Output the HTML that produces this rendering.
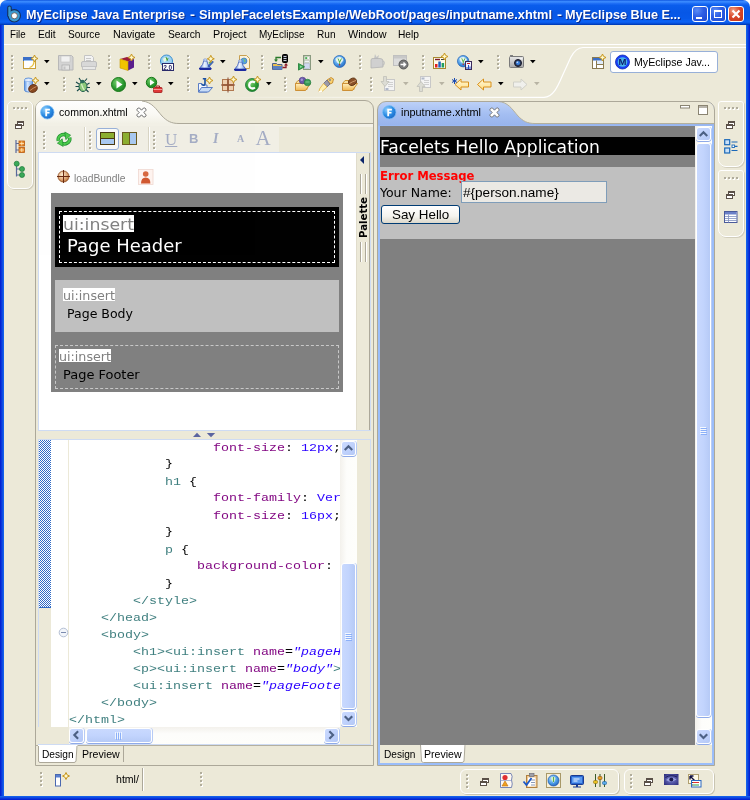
<!DOCTYPE html>
<html>
<head>
<meta charset="utf-8">
<title>MyEclipse</title>
<style>
html,body{margin:0;padding:0;}
body{width:750px;height:800px;overflow:hidden;background:#ECE9D8;position:relative;font-family:"Liberation Sans","DejaVu Sans",sans-serif;font-size:11px;color:#000;}
.abs,#win div,#win span,#win svg{position:absolute;}
#win{will-change:transform;opacity:0.999;position:absolute;left:0;top:0;width:750px;height:800px;overflow:hidden;background:linear-gradient(to bottom,#fff 0,#fff 12px,#ECE9D8 12px);}
.t{white-space:nowrap;line-height:1;transform-origin:0 0;}
/* title */
#title{left:0;top:0;width:750px;height:25px;background:linear-gradient(to bottom,#0A50DC 0,#3A8AFF 5%,#3484FC 9%,#1A6AF4 15%,#0A5DEC 22%,#0757E6 50%,#0759EA 74%,#0C62F4 86%,#0A58E8 92%,#0040C0 97%,#0038B0 100%);border-radius:7px 7px 0 0;}
#title .txt{top:7.5px;color:#fff;font-family:"Liberation Sans","DejaVu Sans",sans-serif;font-weight:bold;font-size:13px;text-shadow:1px 1px 0 #0a2a8a;}
.bl{left:0;top:25px;width:4px;height:775px;background:linear-gradient(to right,#0019CF 0,#0831D9 30%,#166AEE 100%);}
.br{left:746px;top:25px;width:4px;height:775px;background:linear-gradient(to left,#0019CF 0,#0831D9 30%,#166AEE 100%);}
.bb{left:0;top:796px;width:750px;height:4px;background:linear-gradient(to top,#0019CF 0,#0831D9 30%,#166AEE 100%);}
.menu{top:29px;font-size:11px;}
.pane{background:#ECE9D8;}
.mono{font-family:"Liberation Mono","DejaVu Sans Mono",monospace;font-size:13.33px;white-space:pre;line-height:17px;}
.tg{color:#3F7F7F}.at{color:#7F007F}.vl{color:#2A00FF}
.web{font-family:"DejaVu Sans","Liberation Sans",sans-serif;}
.vtrack{background:linear-gradient(to right,#F3F1EC 0,#FDFDFB 40%,#FEFEFB 100%);}
.htrack{background:linear-gradient(to bottom,#F3F1EC 0,#FDFDFB 40%,#FEFEFB 100%);}
.sbb{width:15px;height:15px;box-sizing:border-box;border:1px solid #fff;border-radius:3px;background:linear-gradient(135deg,#CBDAFE 0,#C0D2FC 50%,#B4C8F6 100%);box-shadow:0 1px 0 #8FAAE8, 1px 0 0 #B7CBF5;}
.sbt{box-sizing:border-box;border:1px solid #fff;border-radius:3px;box-shadow:0 1px 0 #8FAAE8, 1px 0 0 #B7CBF5;}
.sbtv{background:linear-gradient(to right,#C9D9FE 0,#C2D4FD 50%,#B6CAF6 100%);}
.sbth{background:linear-gradient(to bottom,#C9D9FE 0,#C2D4FD 50%,#B6CAF6 100%);}
.wb{top:6px;width:16px;height:16px;box-sizing:border-box;border:1px solid #fff;border-radius:3px;background:radial-gradient(circle at 30% 25%,#5B8DF6 0,#2C5DE4 45%,#1F49D0 100%);}
.wc{background:radial-gradient(circle at 30% 25%,#F0A083 0,#D9482A 45%,#C23418 100%);}
</style>
</head>
<body>
<div id="win">
<!-- TITLE BAR -->
<div id="title">
  <svg style="left:6px;top:4px" width="18" height="20" viewBox="0 0 18 20">
    <g stroke="#15305C" stroke-width="2.2" fill="#15305C"><rect x="2.3" y="2.5" width="2.4" height="10" rx="1.2"/><circle cx="8.3" cy="11.8" r="5.6"/></g>
    <g fill="#3C9AD0"><rect x="2.3" y="2.5" width="2.4" height="10" rx="1.2"/><circle cx="8.3" cy="11.8" r="5.6"/></g>
    <circle cx="8.4" cy="11.8" r="3" fill="#fff" stroke="#5A4038" stroke-width="0.7"/>
  </svg>
  <div class="wb" style="left:692px;"><div style="left:3px;top:9.5px;width:6px;height:2.5px;background:#fff"></div></div>
  <div class="wb" style="left:710px;"><div style="left:3px;top:3px;width:8px;height:8px;border:1px solid #fff;border-top-width:2px;box-sizing:border-box;"></div></div>
  <div class="wb wc" style="left:728px;"><svg style="left:0;top:0" width="14" height="14" viewBox="0 0 14 14"><path d="M3.5 3.5l7 7M10.5 3.5l-7 7" stroke="#fff" stroke-width="2.2"/></svg></div>
  <span class="t txt" style="left:26px;--w:159;transform:scaleX(0.9693)">MyEclipse Java Enterprise</span>
  <span class="t txt" style="left:190px;--w:5;transform:scaleX(1.1511)">-</span>
  <span class="t txt" style="left:199px;--w:353;transform:scaleX(0.9878)">SimpleFaceletsExample/WebRoot/pages/inputname.xhtml</span>
  <span class="t txt" style="left:557px;--w:5;transform:scaleX(1.1511)">-</span>
  <span class="t txt" style="left:565px;--w:115.5;transform:scaleX(0.9747)">MyEclipse Blue E...</span>
</div>
<div class="bl"></div><div class="br"></div><div class="bb"></div>

<!-- MENU -->
<span class="t menu" style="left:9.6px;--w:15.7;transform:scaleX(0.8853)">File</span>
<span class="t menu" style="left:37.5px;--w:17.7;transform:scaleX(0.9331)">Edit</span>
<span class="t menu" style="left:67.9px;--w:32;transform:scaleX(0.9180)">Source</span>
<span class="t menu" style="left:112.7px;--w:42.3;transform:scaleX(0.9742)">Navigate</span>
<span class="t menu" style="left:167.5px;--w:32.5;transform:scaleX(0.9323)">Search</span>
<span class="t menu" style="left:212.5px;--w:33.5;transform:scaleX(0.9781)">Project</span>
<span class="t menu" style="left:258.5px;--w:45.5;transform:scaleX(0.9077)">MyEclipse</span>
<span class="t menu" style="left:316.5px;--w:18.5;transform:scaleX(0.9164)">Run</span>
<span class="t menu" style="left:347.5px;--w:38.5;transform:scaleX(0.9840)">Window</span>
<span class="t menu" style="left:397.5px;--w:21;transform:scaleX(0.9282)">Help</span>
<div style="left:4px;top:44px;width:742px;height:1px;background:#fff"></div>

<!-- TB START -->
<svg width="0" height="0" style="left:0;top:0"><defs>
<linearGradient id="gbell" x1="0" y1="0" x2="1" y2="0"><stop offset="0" stop-color="#5A80D8"/><stop offset="0.4" stop-color="#F0F6FF"/><stop offset="0.650" stop-color="#C0D8F8"/><stop offset="1" stop-color="#4A70D0"/></linearGradient>
<radialGradient id="gglobe" cx="0.4" cy="0.350" r="0.750"><stop offset="0" stop-color="#C8E8FF"/><stop offset="0.550" stop-color="#4A9CE8"/><stop offset="1" stop-color="#2058B0"/></radialGradient>
<linearGradient id="gcam" x1="0" y1="0" x2="0" y2="1"><stop offset="0" stop-color="#E8E8E8"/><stop offset="1" stop-color="#A8A8A8"/></linearGradient>
<linearGradient id="gjar" x1="0" y1="0" x2="1" y2="0"><stop offset="0" stop-color="#5A98E8"/><stop offset="0.4" stop-color="#D8E8FF"/><stop offset="1" stop-color="#6AA0E8"/></linearGradient>
<radialGradient id="grun" cx="0.4" cy="0.350" r="0.750"><stop offset="0" stop-color="#7AD070"/><stop offset="0.6" stop-color="#2A9A30"/><stop offset="1" stop-color="#1A7A20"/></radialGradient>
<linearGradient id="gfold" x1="0" y1="0" x2="0" y2="1"><stop offset="0" stop-color="#FFF0C0"/><stop offset="1" stop-color="#F0B850"/></linearGradient>
<linearGradient id="garr" x1="0" y1="0" x2="0" y2="1"><stop offset="0" stop-color="#FFFBE0"/><stop offset="1" stop-color="#FFDC80"/></linearGradient>
</defs></svg>

<svg style="left:10.5px;top:55px" width="3" height="16" viewBox="0 0 3 16"><path d="M1 1h2v2h-2zM1 5h2v2h-2zM1 9h2v2h-2zM1 13h2v2h-2z" fill="#fff"/><path d="M0 0h2v2h-2zM0 4h2v2h-2zM0 8h2v2h-2zM0 12h2v2h-2z" fill="#B2AE9C"/></svg>
<svg style="left:108.3px;top:55px" width="3" height="16" viewBox="0 0 3 16"><path d="M1 1h2v2h-2zM1 5h2v2h-2zM1 9h2v2h-2zM1 13h2v2h-2z" fill="#fff"/><path d="M0 0h2v2h-2zM0 4h2v2h-2zM0 8h2v2h-2zM0 12h2v2h-2z" fill="#B2AE9C"/></svg>
<svg style="left:147.5px;top:55px" width="3" height="16" viewBox="0 0 3 16"><path d="M1 1h2v2h-2zM1 5h2v2h-2zM1 9h2v2h-2zM1 13h2v2h-2z" fill="#fff"/><path d="M0 0h2v2h-2zM0 4h2v2h-2zM0 8h2v2h-2zM0 12h2v2h-2z" fill="#B2AE9C"/></svg>
<svg style="left:186.5px;top:55px" width="3" height="16" viewBox="0 0 3 16"><path d="M1 1h2v2h-2zM1 5h2v2h-2zM1 9h2v2h-2zM1 13h2v2h-2z" fill="#fff"/><path d="M0 0h2v2h-2zM0 4h2v2h-2zM0 8h2v2h-2zM0 12h2v2h-2z" fill="#B2AE9C"/></svg>
<svg style="left:261.3px;top:55px" width="3" height="16" viewBox="0 0 3 16"><path d="M1 1h2v2h-2zM1 5h2v2h-2zM1 9h2v2h-2zM1 13h2v2h-2z" fill="#fff"/><path d="M0 0h2v2h-2zM0 4h2v2h-2zM0 8h2v2h-2zM0 12h2v2h-2z" fill="#B2AE9C"/></svg>
<svg style="left:359.3px;top:55px" width="3" height="16" viewBox="0 0 3 16"><path d="M1 1h2v2h-2zM1 5h2v2h-2zM1 9h2v2h-2zM1 13h2v2h-2z" fill="#fff"/><path d="M0 0h2v2h-2zM0 4h2v2h-2zM0 8h2v2h-2zM0 12h2v2h-2z" fill="#B2AE9C"/></svg>
<svg style="left:421.5px;top:55px" width="3" height="16" viewBox="0 0 3 16"><path d="M1 1h2v2h-2zM1 5h2v2h-2zM1 9h2v2h-2zM1 13h2v2h-2z" fill="#fff"/><path d="M0 0h2v2h-2zM0 4h2v2h-2zM0 8h2v2h-2zM0 12h2v2h-2z" fill="#B2AE9C"/></svg>
<svg style="left:496.5px;top:55px" width="3" height="16" viewBox="0 0 3 16"><path d="M1 1h2v2h-2zM1 5h2v2h-2zM1 9h2v2h-2zM1 13h2v2h-2z" fill="#fff"/><path d="M0 0h2v2h-2zM0 4h2v2h-2zM0 8h2v2h-2zM0 12h2v2h-2z" fill="#B2AE9C"/></svg>
<svg style="left:10.5px;top:77px" width="3" height="16" viewBox="0 0 3 16"><path d="M1 1h2v2h-2zM1 5h2v2h-2zM1 9h2v2h-2zM1 13h2v2h-2z" fill="#fff"/><path d="M0 0h2v2h-2zM0 4h2v2h-2zM0 8h2v2h-2zM0 12h2v2h-2z" fill="#B2AE9C"/></svg>
<svg style="left:62.5px;top:77px" width="3" height="16" viewBox="0 0 3 16"><path d="M1 1h2v2h-2zM1 5h2v2h-2zM1 9h2v2h-2zM1 13h2v2h-2z" fill="#fff"/><path d="M0 0h2v2h-2zM0 4h2v2h-2zM0 8h2v2h-2zM0 12h2v2h-2z" fill="#B2AE9C"/></svg>
<svg style="left:186.5px;top:77px" width="3" height="16" viewBox="0 0 3 16"><path d="M1 1h2v2h-2zM1 5h2v2h-2zM1 9h2v2h-2zM1 13h2v2h-2z" fill="#fff"/><path d="M0 0h2v2h-2zM0 4h2v2h-2zM0 8h2v2h-2zM0 12h2v2h-2z" fill="#B2AE9C"/></svg>
<svg style="left:284.3px;top:77px" width="3" height="16" viewBox="0 0 3 16"><path d="M1 1h2v2h-2zM1 5h2v2h-2zM1 9h2v2h-2zM1 13h2v2h-2z" fill="#fff"/><path d="M0 0h2v2h-2zM0 4h2v2h-2zM0 8h2v2h-2zM0 12h2v2h-2z" fill="#B2AE9C"/></svg>
<svg style="left:369.6px;top:77px" width="3" height="16" viewBox="0 0 3 16"><path d="M1 1h2v2h-2zM1 5h2v2h-2zM1 9h2v2h-2zM1 13h2v2h-2z" fill="#fff"/><path d="M0 0h2v2h-2zM0 4h2v2h-2zM0 8h2v2h-2zM0 12h2v2h-2z" fill="#B2AE9C"/></svg>
<svg style="left:22.7px;top:55px;overflow:visible" width="16" height="16" viewBox="0 0 16 16"><rect x="0.5" y="2.5" width="12" height="11" fill="#fff" stroke="#C9A03A"/><rect x="0.5" y="2.5" width="12" height="3" fill="#3A6FC8" stroke="#3A6FC8"/><path d="M1 5.5h11" stroke="#9CC0F0"/><path d="M11 5 Q11.5 11 6.5 12.5" fill="none" stroke="#E8C040" stroke-width="1.2"/><g transform="translate(8,0)"><path d="M3.5 0 L4.6 2.4 L7 3.5 L4.6 4.6 L3.5 7 L2.4 4.6 L0 3.5 L2.4 2.4 Z" fill="#FFF8C8" stroke="#C8961E" stroke-width="1"/></g></svg>
<svg style="left:58px;top:55px;overflow:visible" width="16" height="16" viewBox="0 0 16 16"><path d="M0.5 0.5h13l1.5 1.5v13h-14.5z" fill="#D4D4D4" stroke="#B8B8B8"/><rect x="3" y="1" width="9" height="6" fill="#F2F2F2" stroke="#C0C0C0" stroke-width="0.6"/><rect x="4" y="10" width="7.5" height="5" fill="#E4E4E4" stroke="#B0B0B0" stroke-width="0.8"/><rect x="5.5" y="11.5" width="2" height="3" fill="#C4C4C4"/></svg>
<svg style="left:81px;top:55px;overflow:visible" width="16" height="16" viewBox="0 0 16 16"><path d="M3.5 0.5h7l2 2v5h-9z" fill="#F4F4F4" stroke="#C4C4C4"/><path d="M5 3.5h5M5 5.5h5" stroke="#C8C8C8"/><rect x="0.5" y="6.5" width="15" height="6" rx="1.5" fill="#D8D8D8" stroke="#BEBEBE"/><rect x="1.5" y="11.5" width="13" height="3" fill="#E8E8E8" stroke="#C4C4C4"/></svg>
<svg style="left:118.7px;top:54.5px;overflow:visible" width="16" height="16" viewBox="0 0 16 16"><path d="M1 4 L8 2 L15 4 L9 6.5 Z" fill="#9B1C3A"/><path d="M1 4 L9 6.5 L9 15.5 L1 13 Z" fill="#F2C400"/><path d="M9 6.5 L15 4 L15 12.5 L9 15.5 Z" fill="#5A1E8C"/><path d="M1 4 L9 6.5 L9 15.5 L1 13 Z" fill="none" stroke="#C89A00" stroke-width="0.6"/><g transform="translate(9,-1)"><path d="M3.5 0 L4.6 2.4 L7 3.5 L4.6 4.6 L3.5 7 L2.4 4.6 L0 3.5 L2.4 2.4 Z" fill="#FFF8C8" stroke="#C8961E" stroke-width="1"/></g></svg>
<svg style="left:160.3px;top:54.5px;overflow:visible" width="16" height="16" viewBox="0 0 16 16"><circle cx="6.5" cy="6" r="6" fill="#9DD2F4" stroke="#3A8FD0"/><path d="M3 4 Q5 1 8 3 Q7 6 4 7Z" fill="#E8F8E0"/><path d="M6 2l1 3M8 3l-1 3" stroke="#4AA040"/><rect x="2.5" y="8.5" width="11" height="7" fill="#fff" stroke="#2A2A6A"/><text x="3.2" y="14.6" font-family="Liberation Sans, sans-serif" font-weight="bold" font-size="6.5" fill="#2A2A6A">2.0</text></svg>
<svg style="left:198.7px;top:55px;overflow:visible" width="16" height="16" viewBox="0 0 16 16"><path d="M4.8 5.8 L7.8 5.8 Q8.2 9.5 11.8 13 L0.8 13 Q4.4 9.5 4.8 5.8 Z" fill="url(#gbell)" stroke="#3A58B8" stroke-width="0.8"/><ellipse cx="6.3" cy="5" rx="1.9" ry="1.1" fill="#D8E8FF" stroke="#5A78C8" stroke-width="0.6"/><path d="M0 13 L12.6 13 L12.6 14 L11.6 15 L1 15 L0 14 Z" fill="#1C2AA0"/><path d="M13.5 6 L14.5 7 L10.5 11.5 L9 11.8 L9.3 10.3 Z" fill="#3A68C8" stroke="#2A4890" stroke-width="0.5"/><path d="M9.5 7.5l2-1.5 1 1.5-2 1.5z" fill="#6AB060"/><g transform="translate(8.3,0.3)"><path d="M3.5 0 L4.6 2.4 L7 3.5 L4.6 4.6 L3.5 7 L2.4 4.6 L0 3.5 L2.4 2.4 Z" fill="#FFF8C8" stroke="#C8961E" stroke-width="1"/></g></svg>
<svg style="left:234px;top:54.5px;overflow:visible" width="16" height="16" viewBox="0 0 16 16"><path d="M5.5 0.5h7l3 3v10h-10z" fill="#FBF3DC" stroke="#C8A050"/><circle cx="10" cy="6" r="3" fill="#58A0E0" stroke="#3070B8" stroke-width="0.6"/><path d="M9 4 Q11 4 11 7" stroke="#80C860" fill="none"/><g transform="translate(0,1)"><path d="M4.8 5.8 L7.8 5.8 Q8.2 9.5 11.8 13 L0.8 13 Q4.4 9.5 4.8 5.8 Z" fill="url(#gbell)" stroke="#3A58B8" stroke-width="0.8"/><ellipse cx="6.3" cy="5" rx="1.9" ry="1.1" fill="#D8E8FF" stroke="#5A78C8" stroke-width="0.6"/><path d="M0 13 L12.6 13 L12.6 14 L11.6 15 L1 15 L0 14 Z" fill="#1C2AA0"/></g></svg>
<svg style="left:272px;top:54px;overflow:visible" width="16" height="16" viewBox="0 0 16 16"><rect x="10.5" y="0.5" width="5" height="8" rx="1" fill="#1A1A1A" stroke="#000"/><path d="M11.5 2.5h3M11.5 4.5h3M11.5 6.5h3" stroke="#C8D0E0"/><path d="M9 3.5h-5v3" fill="none" stroke="#2A7A2A" stroke-width="1.3"/><path d="M2 5.5l2 2.5 2-2.5z" fill="#2A7A2A"/><path d="M0.5 9.5h4l1 1h4.5v5h-9.5z" fill="#E8C050" stroke="#4A6090"/><path d="M1 12h9v3.5h-9z" fill="#5A80C0"/><path d="M10.5 13.5h3.5v-3" fill="none" stroke="#8A1A2A" stroke-width="1.3"/><path d="M12 11.5l2-2.5 2 2.5z" fill="#8A1A2A"/></svg>
<svg style="left:298px;top:55px;overflow:visible" width="16" height="16" viewBox="0 0 16 16"><rect x="5.5" y="0.5" width="7" height="14" fill="#E4E8E0" stroke="#8A9A80"/><rect x="6.5" y="1.5" width="5" height="3" fill="#F4F6F0" stroke="#A8B4A0" stroke-width="0.5"/><rect x="7.2" y="2.3" width="2" height="1.5" fill="#20A030"/><rect x="6.5" y="5.5" width="5" height="2" fill="#F0F2F8" stroke="#A8B4A0" stroke-width="0.5"/><rect x="6.5" y="8.5" width="5" height="5" fill="#D0D8F0" stroke="#A8B0C8" stroke-width="0.5"/><path d="M0.5 8.5l6 3.3-6 3.3z" fill="#38A858" stroke="#1A7A30" stroke-width="0.8"/><path d="M2 10.5l2.5 1.3-2.5 1.3z" fill="#90D8A0"/></svg>
<svg style="left:333px;top:54.5px;overflow:visible" width="16" height="16" viewBox="0 0 16 16"><circle cx="6.5" cy="6.5" r="6" fill="url(#gglobe)" stroke="#2A68B8" stroke-width="0.8"/><path d="M2.5 4 Q4 1.8 7 2 Q10 2.5 10.5 5 Q9 7.5 7 9.5 Q3.5 8 2.5 4Z" fill="#F4FAF0" opacity="0.850"/><path d="M5 3.5l1.5 3.5M8.5 3.5l-1.8 3.5M6.6 6v3" stroke="#58B048" stroke-width="1" fill="none"/><circle cx="6.6" cy="9.8" r="0.8" fill="#D02020"/></svg>
<svg style="left:370.3px;top:54px;overflow:visible" width="16" height="16" viewBox="0 0 16 16"><path d="M5 0l1.5 3 2.5-2-1 4h-4z" fill="#C4C4C4"/><path d="M1 6 Q1 4 4 4.5 L10 4.5 Q13 4.5 13 7 L13 13 L1 14Z" fill="#D0D0D0" stroke="#B4B4B4" stroke-width="0.8"/><path d="M12 7 Q15 7 14 10 Q13.5 11.5 12 11" fill="none" stroke="#C0C0C0" stroke-width="1.2"/></svg>
<svg style="left:393px;top:55px;overflow:visible" width="16" height="16" viewBox="0 0 16 16"><rect x="0.5" y="0.5" width="13" height="10" fill="#DCDCDC" stroke="#C0C0C0"/><rect x="1" y="1" width="12" height="2.5" fill="#C8C8C8"/><circle cx="10.5" cy="9.5" r="4.5" fill="#7A7A7A" stroke="#5A5A5A"/><path d="M7.5 9.5h5M10.5 7.5l2 2-2 2" fill="none" stroke="#fff" stroke-width="1.4"/></svg>
<svg style="left:433px;top:54.3px;overflow:visible" width="16" height="16" viewBox="0 0 16 16"><rect x="0.5" y="3.5" width="12" height="11" fill="#FFFBEA" stroke="#A88830"/><path d="M2 5.5h5" stroke="#7A1A2A" stroke-width="1.4"/><path d="M8 5.5h3" stroke="#404040" stroke-width="1"/><rect x="2" y="10" width="2.5" height="3.5" fill="#E02020"/><rect x="5.3" y="7.5" width="2.5" height="6" fill="#2060C0"/><rect x="8.6" y="9" width="2.5" height="4.5" fill="#20A060"/><g transform="translate(8,-1)"><path d="M3.5 0 L4.6 2.4 L7 3.5 L4.6 4.6 L3.5 7 L2.4 4.6 L0 3.5 L2.4 2.4 Z" fill="#FFF8C8" stroke="#C8961E" stroke-width="1"/></g></svg>
<svg style="left:456.7px;top:54.5px;overflow:visible" width="16" height="16" viewBox="0 0 16 16"><g transform="scale(0.95)"><circle cx="6.5" cy="6.5" r="6" fill="url(#gglobe)" stroke="#2A68B8" stroke-width="0.8"/><path d="M2.5 4 Q4 1.8 7 2 Q10 2.5 10.5 5 Q9 7.5 7 9.5 Q3.5 8 2.5 4Z" fill="#F4FAF0" opacity="0.850"/><path d="M5 3.5l1.5 3.5M8.5 3.5l-1.8 3.5M6.6 6v3" stroke="#58B048" stroke-width="1" fill="none"/><circle cx="6.6" cy="9.8" r="0.8" fill="#D02020"/></g><rect x="8.5" y="6.5" width="6" height="8" fill="#F0F0FF" stroke="#3A2A5A"/><path d="M10 12v2M11.5 10v4M13 11.5v2.5" stroke-width="1" stroke="#2050C0"/><path d="M10 8.5h3" stroke="#D02020"/></svg>
<svg style="left:509px;top:55.3px;overflow:visible" width="16" height="16" viewBox="0 0 16 16"><rect x="1" y="0" width="3" height="2" fill="#808080"/><rect x="0.5" y="1.5" width="14" height="11" rx="1" fill="url(#gcam)" stroke="#7A7A7A"/><rect x="10.5" y="3" width="3" height="1.5" fill="#F4F4F4"/><circle cx="9" cy="8" r="3.5" fill="#2A3A5A" stroke="#1A1A2A"/><circle cx="9" cy="8" r="2" fill="#3A80E0"/><circle cx="8.3" cy="7.3" r="0.8" fill="#C8E0FF"/></svg>
<svg style="left:43.7px;top:60px" width="6" height="4" viewBox="0 0 6 4"><path d="M0 0h5.6l-2.8 3.2z" fill="#000"/></svg>
<svg style="left:219.6px;top:60px" width="6" height="4" viewBox="0 0 6 4"><path d="M0 0h5.6l-2.8 3.2z" fill="#000"/></svg>
<svg style="left:317.7px;top:60px" width="6" height="4" viewBox="0 0 6 4"><path d="M0 0h5.6l-2.8 3.2z" fill="#000"/></svg>
<svg style="left:477.7px;top:60px" width="6" height="4" viewBox="0 0 6 4"><path d="M0 0h5.6l-2.8 3.2z" fill="#000"/></svg>
<svg style="left:529.7px;top:60px" width="6" height="4" viewBox="0 0 6 4"><path d="M0 0h5.6l-2.8 3.2z" fill="#000"/></svg>
<svg style="left:22.7px;top:77px;overflow:visible" width="16" height="16" viewBox="0 0 16 16"><path d="M1.5 3 Q1.5 1 5.5 1 Q9.5 1 9.5 3 L9.5 13 Q9.5 15 5.5 15 Q1.5 15 1.5 13Z" fill="url(#gjar)" stroke="#4A80D0" stroke-width="0.8"/><ellipse cx="5.5" cy="3" rx="4" ry="1.5" fill="#E4F0FF" stroke="#6A9AE0" stroke-width="0.5"/><ellipse cx="10" cy="11.5" rx="4.5" ry="3.8" transform="rotate(-30 10 11.5)" fill="#8A4A20" stroke="#5A2A10" stroke-width="0.8"/><path d="M7 13.5 Q10 11 13.5 9.5" stroke="#D8A070" fill="none" stroke-width="0.8"/><g transform="translate(9,0)"><path d="M3.5 0 L4.6 2.4 L7 3.5 L4.6 4.6 L3.5 7 L2.4 4.6 L0 3.5 L2.4 2.4 Z" fill="#FFF8C8" stroke="#C8961E" stroke-width="1"/></g></svg>
<svg style="left:75px;top:77px;overflow:visible" width="16" height="16" viewBox="0 0 16 16"><path d="M4 1l2 3M12 1.5l-2 2.5M1 5l3 2M0.5 9.5h3.5M2 14l3-2.5M14.5 6l-2.5 1.5M15 10.5h-3M13.5 15l-2.5-2.5" stroke="#1A4A4A" stroke-width="1.1" fill="none"/><ellipse cx="8" cy="9.5" rx="4" ry="5" fill="#8AC878" stroke="#1A5A4A" stroke-width="1"/><ellipse cx="7.5" cy="4.5" rx="2.3" ry="1.8" fill="#2A6A5A"/><path d="M6.5 7 Q8 12 9.5 13" stroke="#D8F0C8" stroke-width="1.2" fill="none"/></svg>
<svg style="left:111px;top:76.5px;overflow:visible" width="16" height="16" viewBox="0 0 16 16"><circle cx="7.5" cy="7.5" r="7" fill="url(#grun)" stroke="#1A7A1A" stroke-width="1"/><path d="M5.5 3.5l6 4-6 4z" fill="#fff"/></svg>
<svg style="left:145.7px;top:77px;overflow:visible" width="16" height="16" viewBox="0 0 16 16"><circle cx="5.5" cy="5.5" r="5.2" fill="url(#grun)" stroke="#1A7A1A" stroke-width="1"/><path d="M4 2.5l4.5 3-4.5 3z" fill="#fff"/><rect x="7.5" y="10.5" width="8.5" height="5" rx="0.8" fill="#E03838" stroke="#A01818" stroke-width="0.8"/><path d="M10 10.5v-1.5h3.5v1.5" fill="none" stroke="#A01818" stroke-width="1"/><path d="M7.5 12.5h8.5" stroke="#FFB0B0" stroke-width="0.8"/></svg>
<svg style="left:197.3px;top:76.7px;overflow:visible" width="16" height="16" viewBox="0 0 16 16"><path d="M1.5 6.5h3.5l1 1.5h4v7h-8.5z" fill="#F4F8FF" stroke="#4A70C0" stroke-width="0.9"/><path d="M1.5 15l3-4.5h11l-4 4.5z" fill="#C8DCF8" stroke="#4A70C0" stroke-width="0.9"/><path d="M5.8 1.8h3.4M8 1.8v4.5 Q8 8.3 6.3 8.3 Q5 8.3 4.8 7" fill="none" stroke="#1A50A0" stroke-width="1.6"/><g transform="translate(9,0)"><path d="M3.5 0 L4.6 2.4 L7 3.5 L4.6 4.6 L3.5 7 L2.4 4.6 L0 3.5 L2.4 2.4 Z" fill="#FFF8C8" stroke="#C8961E" stroke-width="1"/></g></svg>
<svg style="left:221px;top:77px;overflow:visible" width="16" height="16" viewBox="0 0 16 16"><rect x="1.5" y="2.5" width="5" height="5" fill="#F0D0B0" stroke="#B07850"/><rect x="7.5" y="2.5" width="5" height="5" fill="#F0D0B0" stroke="#B07850"/><rect x="1.5" y="8.5" width="5" height="5" fill="#F0D0B0" stroke="#B07850"/><rect x="7.5" y="8.5" width="5" height="5" fill="#F0D0B0" stroke="#B07850"/><path d="M7 0.5v15M0 8h14" stroke="#8A4A30" stroke-width="1"/><g transform="translate(9,-1)"><path d="M3.5 0 L4.6 2.4 L7 3.5 L4.6 4.6 L3.5 7 L2.4 4.6 L0 3.5 L2.4 2.4 Z" fill="#FFF8C8" stroke="#C8961E" stroke-width="1"/></g></svg>
<svg style="left:244.7px;top:77px;overflow:visible" width="16" height="16" viewBox="0 0 16 16"><circle cx="7" cy="8" r="6.5" fill="url(#grun)" stroke="#1A7A3A" stroke-width="0.8"/><path d="M10 5.5 Q7 3.5 4.8 6 Q3.5 8.5 5 10.5 Q7.5 12.5 10 10.5" fill="none" stroke="#fff" stroke-width="2.2"/><g transform="translate(9,-1)"><path d="M3.5 0 L4.6 2.4 L7 3.5 L4.6 4.6 L3.5 7 L2.4 4.6 L0 3.5 L2.4 2.4 Z" fill="#FFF8C8" stroke="#C8961E" stroke-width="1"/></g></svg>
<svg style="left:294.7px;top:77px;overflow:visible" width="16" height="16" viewBox="0 0 16 16"><path d="M0.5 6.5l2.5-3h9v9z" fill="#F8E0A0" stroke="#C8902A" stroke-width="0.9"/><path d="M0.5 6.5h11l4 0 -5 7h-10z" fill="url(#gfold)" stroke="#C8882A" stroke-width="0.9"/><circle cx="7.5" cy="3.5" r="3.3" fill="#6A58A8" stroke="#4A3888" stroke-width="0.6"/><circle cx="6.8" cy="2.8" r="1.2" fill="#A898D8"/><circle cx="12.5" cy="5.5" r="3.3" fill="#3A9A58" stroke="#1A7A38" stroke-width="0.6"/><path d="M10.5 5h4" stroke="#90D8A0" stroke-width="0.8"/></svg>
<svg style="left:318px;top:76.5px;overflow:visible" width="16" height="16" viewBox="0 0 16 16"><path d="M9 3l4-2.5 2.5 1.5-1 4-2.5 1z" fill="#F8D070" stroke="#C08020" stroke-width="0.8"/><circle cx="12" cy="3" r="0.8" fill="#3050A0"/><path d="M9 3l3 4-3 3-3.5-3.5z" fill="#9A9AA8" stroke="#6A6A78" stroke-width="0.8"/><path d="M5.5 6.5l3.5 3.5-5 4.5-3 0.5 0.5-3z" fill="#FFF0B0" stroke="#E0B040" stroke-width="0.8"/><path d="M1 15l3-1" stroke="#fff" stroke-width="1.5"/></svg>
<svg style="left:342px;top:77px;overflow:visible" width="16" height="16" viewBox="0 0 16 16"><path d="M0.5 6.5l2.5-3h9v9z" fill="#F8E0A0" stroke="#C8902A" stroke-width="0.9"/><path d="M0.5 6.5h11l4 0 -5 7h-10z" fill="url(#gfold)" stroke="#C8882A" stroke-width="0.9"/><ellipse cx="10.5" cy="4.8" rx="4.2" ry="3.5" transform="rotate(-25 10.5 4.8)" fill="#8A5028" stroke="#5A3010" stroke-width="0.8"/><path d="M7.5 6.5 Q10.5 4.5 14 3.5" stroke="#D8A878" fill="none" stroke-width="0.9"/></svg>
<svg style="left:381px;top:76.4px;overflow:visible" width="16" height="16" viewBox="0 0 16 16"><rect x="3.5" y="3.5" width="10" height="11" fill="#F4F4F4" stroke="#C8C8C8"/><path d="M7 6.5h5M7 8.5h5M7 10.5h5" stroke="#D0D0D0"/><rect x="4.5" y="12" width="3" height="2" fill="#B0B8C8"/><path d="M2.5 0.5h3v5h2.5l-4 5-4-5h2.5z" fill="#DCDCD4" stroke="#C0C0B8" stroke-width="0.8"/></svg>
<svg style="left:416.7px;top:76px;overflow:visible" width="16" height="16" viewBox="0 0 16 16"><rect x="3.5" y="0.5" width="10" height="11" fill="#F4F4F4" stroke="#C8C8C8"/><path d="M7 4.5h5M7 6.5h5M7 8.5h5" stroke="#D0D0D0"/><rect x="4.5" y="1.5" width="3" height="2" fill="#B0B8C8"/><path d="M2.5 15.5h3v-5h2.5l-4-5-4 5h2.5z" fill="#DCDCD4" stroke="#C0C0B8" stroke-width="0.8"/></svg>
<svg style="left:451.7px;top:77.5px;overflow:visible" width="16" height="16" viewBox="0 0 16 16"><g transform="translate(2.5,0.5)"><path d="M0.5 6l6-5.5v3h7.5v5h-7.5v3z" fill="url(#garr)" stroke="#D8901A" stroke-width="1" stroke-linejoin="round"/></g><path d="M2.5 0v6M0 1.5l5 3M5 1.5l-5 3" stroke="#1A4AB0" stroke-width="1"/></svg>
<svg style="left:477px;top:77.5px;overflow:visible" width="16" height="16" viewBox="0 0 16 16"><g transform="translate(0,0.5)"><path d="M0.5 6l6-5.5v3h7.5v5h-7.5v3z" fill="url(#garr)" stroke="#D8901A" stroke-width="1" stroke-linejoin="round"/></g></svg>
<svg style="left:513px;top:77.5px;overflow:visible" width="16" height="16" viewBox="0 0 16 16"><g transform="translate(14.5,0.5) scale(-1,1)"><path d="M0.5 6l6-5.5v3h7.5v5h-7.5v3z" fill="#F0F0EC" stroke="#D0D0C8" stroke-width="1" stroke-linejoin="round"/></g></svg>
<svg style="left:43.7px;top:82px" width="6" height="4" viewBox="0 0 6 4"><path d="M0 0h5.6l-2.8 3.2z" fill="#000"/></svg>
<svg style="left:96px;top:82px" width="6" height="4" viewBox="0 0 6 4"><path d="M0 0h5.6l-2.8 3.2z" fill="#000"/></svg>
<svg style="left:132px;top:82px" width="6" height="4" viewBox="0 0 6 4"><path d="M0 0h5.6l-2.8 3.2z" fill="#000"/></svg>
<svg style="left:167.7px;top:82px" width="6" height="4" viewBox="0 0 6 4"><path d="M0 0h5.6l-2.8 3.2z" fill="#000"/></svg>
<svg style="left:265.7px;top:82px" width="6" height="4" viewBox="0 0 6 4"><path d="M0 0h5.6l-2.8 3.2z" fill="#000"/></svg>
<svg style="left:497.7px;top:82px" width="6" height="4" viewBox="0 0 6 4"><path d="M0 0h5.6l-2.8 3.2z" fill="#000"/></svg>
<svg style="left:403px;top:82px" width="6" height="4" viewBox="0 0 6 4"><path d="M0 0h5.6l-2.8 3.2z" fill="#B8B4A4"/></svg>
<svg style="left:438.7px;top:82px" width="6" height="4" viewBox="0 0 6 4"><path d="M0 0h5.6l-2.8 3.2z" fill="#B8B4A4"/></svg>
<svg style="left:534px;top:82px" width="6" height="4" viewBox="0 0 6 4"><path d="M0 0h5.6l-2.8 3.2z" fill="#B8B4A4"/></svg>
<svg style="left:4px;top:44px" width="742" height="56" viewBox="0 0 742 56"><defs><linearGradient id="gtail" x1="0" y1="0" x2="1" y2="0"><stop offset="0.350" stop-color="#fff" stop-opacity="0"/><stop offset="1" stop-color="#fff" stop-opacity="1"/></linearGradient></defs><rect x="0" y="52.8" width="540" height="1.2" fill="url(#gtail)"/><path d="M742 3.5 L579 3.5 C572 4 569 9 566.8 13.2 L557.6 33.6 C554 42 549 53.4 540 53.4" fill="none" stroke="#fff" stroke-width="1.2"/></svg>
<svg style="left:592px;top:55.3px;overflow:visible" width="16" height="16" viewBox="0 0 16 16"><rect x="0.5" y="2.5" width="11" height="11" fill="#fff" stroke="#8A7A50"/><rect x="1" y="3" width="10" height="2.5" fill="#3A6FC8"/><path d="M4.5 5.5v8M4.5 9.5h7" stroke="#8A7A50"/><rect x="5" y="6" width="6" height="3" fill="#E0ECFA"/><g transform="translate(7,-1)"><path d="M3.5 0 L4.6 2.4 L7 3.5 L4.6 4.6 L3.5 7 L2.4 4.6 L0 3.5 L2.4 2.4 Z" fill="#FFF8C8" stroke="#C8961E" stroke-width="1"/></g></svg>
<div style="left:610px;top:51px;width:108px;height:22px;box-sizing:border-box;background:#fff;border:1px solid #98B0D8;border-radius:3px;"></div>
<svg style="left:615px;top:54px" width="16" height="16" viewBox="0 0 16 16"><circle cx="7.5" cy="8" r="7" fill="#1A40F8" stroke="#1028B0" stroke-width="0.8"/><circle cx="7.5" cy="8" r="4.8" fill="#48B4EA"/><text x="7.5" y="11.3" text-anchor="middle" font-family="Liberation Sans, sans-serif" font-weight="bold" font-size="9.5" fill="#102070">M</text></svg>
<span class="t" style="left:634px;top:57px;font-size:11px;--w:76;transform:scaleX(0.9662)">MyEclipse Jav...</span>
<!-- TB END -->
<!-- LEFT TRIM -->
<div style="left:6.5px;top:100.5px;width:26.5px;height:88px;border:1.5px solid #fff;border-radius:5px 5px 7px 7px;box-sizing:border-box;box-shadow:1px 1px 0 #D2CEBC;"></div>
<!-- RIGHT TRIMS -->
<div style="left:717.5px;top:100.5px;width:26px;height:66px;border:1.5px solid #fff;border-radius:3px 3px 8px 8px;box-sizing:border-box;box-shadow:1px 1px 0 #D2CEBC;"></div>
<div style="left:717.5px;top:170px;width:26px;height:66.5px;border:1.5px solid #fff;border-radius:3px 3px 8px 8px;box-sizing:border-box;box-shadow:1px 1px 0 #D2CEBC;"></div>

<!-- LEFT PANE -->
<div id="lp" style="left:35px;top:100px;width:339px;height:666px;border:1px solid #ACA899;border-radius:9px 9px 0 0;box-sizing:border-box;background:#ECE9D8;"></div>
<svg style="left:36px;top:101px" width="337" height="26" viewBox="0 0 337 26">
  <defs><linearGradient id="gtab" x1="0" y1="0" x2="0" y2="1"><stop offset="0" stop-color="#FFFFFF"/><stop offset="0.5" stop-color="#FBFAF5"/><stop offset="1" stop-color="#F0EEE2"/></linearGradient></defs>
  <path d="M0 26 L0 8 Q0 0 8 0 L106 0 C116 1 120 8 126 15 C131 20 135 22.5 143 22.5 L143 26 Z" fill="url(#gtab)"/>
  <path d="M106 0 C116 1 120 8 126 15 C131 20 135 22.5 143 22.5 L337 22.5" fill="none" stroke="#ACA899" stroke-width="1"/>
  <rect x="0" y="23" width="337" height="3" fill="#F3F1E7"/>
</svg>
<svg style="left:40px;top:105px" width="15" height="15" viewBox="0 0 15 15"><defs><radialGradient id="gfa" cx="0.35" cy="0.3" r="0.8"><stop offset="0" stop-color="#8FD0FF"/><stop offset="0.55" stop-color="#2A8CE4"/><stop offset="1" stop-color="#1A60C0"/></radialGradient></defs><circle cx="7.3" cy="7.3" r="6.7" fill="url(#gfa)" stroke="#7CC0F8" stroke-width="0.8"/><path d="M5.3 3.8h4.6v1.7h-2.8v1.4h2.4v1.6h-2.4v2.8h-1.8z" fill="#fff"/></svg>
<span class="t" style="left:59px;top:107px;font-size:11px;--w:68.6;transform:scaleX(0.9590)">common.xhtml</span>
<svg style="left:135.5px;top:106.5px" width="12" height="12" viewBox="0 0 12 12"><path d="M1 2.2 L2.2 1 L3.5 1 L5.5 3.2 L7.5 1 L8.8 1 L10 2.2 L10 3.3 L7.8 5.5 L10 7.7 L10 8.8 L8.8 10 L7.5 10 L5.5 7.8 L3.5 10 L2.2 10 L1 8.8 L1 7.7 L3.2 5.5 L1 3.3 Z" fill="#fff" stroke="#5C5C5C" stroke-width="0.9"/></svg>
<!-- editor toolbar -->
<div style="left:36px;top:126px;width:243px;height:26px;background:#F1EFE5"></div>
<div style="left:84px;top:127px;width:1px;height:24px;background:#D8D4C4"></div><div style="left:85px;top:127px;width:1px;height:24px;background:#fff"></div>
<div style="left:148px;top:127px;width:1px;height:24px;background:#D8D4C4"></div><div style="left:149px;top:127px;width:1px;height:24px;background:#fff"></div>
<svg style="left:42.5px;top:131px" width="3" height="20" viewBox="0 0 3 20"><path d="M1 1h2v2h-2zM1 5h2v2h-2zM1 9h2v2h-2zM1 13h2v2h-2zM1 17h2v2h-2z" fill="#fff"/><path d="M0 0h2v2h-2zM0 4h2v2h-2zM0 8h2v2h-2zM0 12h2v2h-2zM0 16h2v2h-2z" fill="#B2AE9C"/></svg>
<svg style="left:88.5px;top:131px" width="3" height="20" viewBox="0 0 3 20"><path d="M1 1h2v2h-2zM1 5h2v2h-2zM1 9h2v2h-2zM1 13h2v2h-2zM1 17h2v2h-2z" fill="#fff"/><path d="M0 0h2v2h-2zM0 4h2v2h-2zM0 8h2v2h-2zM0 12h2v2h-2zM0 16h2v2h-2z" fill="#B2AE9C"/></svg>
<svg style="left:152.5px;top:131px" width="3" height="20" viewBox="0 0 3 20"><path d="M1 1h2v2h-2zM1 5h2v2h-2zM1 9h2v2h-2zM1 13h2v2h-2zM1 17h2v2h-2z" fill="#fff"/><path d="M0 0h2v2h-2zM0 4h2v2h-2zM0 8h2v2h-2zM0 12h2v2h-2zM0 16h2v2h-2z" fill="#B2AE9C"/></svg>
<!-- refresh -->
<svg style="left:56px;top:131px" width="16" height="16" viewBox="0 0 16 16">
  <g><path d="M2.3 9.8 A5.2 5.2 0 0 1 10.5 4.6" fill="none" stroke="#1E8C2E" stroke-width="3.4"/><path d="M2.3 9.8 A5.2 5.2 0 0 1 10.5 4.6" fill="none" stroke="#4CCB4C" stroke-width="2"/><path d="M8.8 1 L14.6 4.2 L9.8 8.6 Z" fill="#4CCB4C" stroke="#1E8C2E" stroke-width="0.7"/></g>
  <g transform="rotate(180 8 8.2)"><path d="M2.3 9.8 A5.2 5.2 0 0 1 10.5 4.6" fill="none" stroke="#1E8C2E" stroke-width="3.4"/><path d="M2.3 9.8 A5.2 5.2 0 0 1 10.5 4.6" fill="none" stroke="#4CCB4C" stroke-width="2"/><path d="M8.8 1 L14.6 4.2 L9.8 8.6 Z" fill="#4CCB4C" stroke="#1E8C2E" stroke-width="0.7"/></g>
</svg>
<!-- toggle buttons -->
<div style="left:96px;top:128px;width:23px;height:22px;box-sizing:border-box;border:1px solid #98B0D8;border-radius:3px;background:#FAFAF7;"></div>
<svg style="left:100px;top:132px" width="16" height="14" viewBox="0 0 16 14"><rect x="0.5" y="0.5" width="14" height="12" fill="#A8C8F0" stroke="#4A3A10"/><rect x="1" y="1" width="13" height="5" fill="#8CAE30"/><path d="M0.5 6.5h14" stroke="#4A3A10"/></svg>
<svg style="left:122px;top:132px" width="16" height="14" viewBox="0 0 16 14"><rect x="0.5" y="0.5" width="14" height="12" fill="#A8C8F0" stroke="#6A5A20"/><rect x="1" y="1" width="6" height="11" fill="#8CAE30"/><path d="M7.5 0.5v12" stroke="#6A5A20"/></svg>
<!-- disabled formatting -->
<span class="t" style="left:165px;top:131px;font-family:'Liberation Serif','DejaVu Serif',serif;font-size:17px;color:#A4ACC4;text-decoration:underline;">U</span>
<span class="t" style="left:189px;top:132px;font-family:'Liberation Sans',sans-serif;font-weight:bold;font-size:13px;color:#A4ACC4;">B</span>
<span class="t" style="left:213px;top:132px;font-family:'Liberation Serif','DejaVu Serif',serif;font-style:italic;font-weight:bold;font-size:14px;color:#A4ACC4;">I</span>
<span class="t" style="left:237px;top:134px;font-family:'Liberation Serif',serif;font-weight:bold;font-size:10px;color:#A4ACC4;">A</span>
<span class="t" style="left:255.5px;top:128px;font-family:'Liberation Serif',serif;font-size:21px;color:#A4ACC4;">A</span>
<!-- design canvas -->
<div style="left:38px;top:152px;width:333px;height:279px;border:1px solid #CEDBF3;box-sizing:border-box;"></div>
<div style="left:39px;top:153px;width:317px;height:277px;background:#fff;"></div>
<div style="left:356px;top:153px;width:14px;height:277px;background:#ECE9D8;border-right:1px solid #ACA899;border-left:1px solid #E0DCCC;box-sizing:border-box;"></div>
<!-- palette -->
<svg style="left:356px;top:152px" width="14" height="120" viewBox="0 0 14 120">
  <polygon points="8,4 8,12 4,8" fill="#0A246A"/>
  <path d="M4.5 22v20M9.5 22v20M4.5 90v20M9.5 90v20" stroke="#ACA899" stroke-width="1"/>
  <path d="M5.5 22v20M10.5 22v20M5.5 90v20M10.5 90v20" stroke="#fff" stroke-width="1"/>
  <text transform="translate(11,86) rotate(-90)" font-family="DejaVu Sans, Liberation Sans, sans-serif" font-weight="bold" font-size="11" fill="#000" textLength="41" lengthAdjust="spacingAndGlyphs">Palette</text>
</svg>
<!-- loadBundle -->
<span class="t" style="left:73.5px;top:173px;font-size:11px;color:#808080;--w:51.5;transform:scaleX(0.9353)">loadBundle</span>
<!-- gray page -->
<div style="left:51px;top:193px;width:292px;height:199px;background:#808080"></div>
<div style="left:55px;top:207px;width:284px;height:60px;background:#000"></div>
<div style="left:59px;top:211px;width:276px;height:52px;border:1px dashed #fff;box-sizing:border-box;"></div>
<div style="left:63px;top:215px;width:71px;height:17px;background:#fff"></div>
<span class="t web" style="left:63px;top:216.5px;font-size:16.5px;color:#808080;--w:71;transform:scaleX(1.0494)">ui:insert</span>
<span class="t web" style="left:67.4px;top:237.7px;font-size:17.5px;color:#fff;--w:114.6;transform:scaleX(1.0264)">Page Header</span>
<div style="left:55px;top:280px;width:284px;height:52px;background:#C0C0C0"></div>
<div style="left:63px;top:288px;width:52px;height:13px;background:#fff"></div>
<span class="t web" style="left:63px;top:290px;font-size:12px;color:#808080;--w:52;transform:scaleX(1.0568)">ui:insert</span>
<span class="t web" style="left:67.4px;top:308px;font-size:12px;color:#000;--w:66;transform:scaleX(1.0448)">Page Body</span>
<div style="left:55px;top:345px;width:284px;height:44px;border:1px dashed #C8C8C8;box-sizing:border-box;"></div>
<div style="left:59px;top:349px;width:52px;height:13px;background:#fff"></div>
<span class="t web" style="left:59px;top:351px;font-size:12px;color:#808080;--w:52;transform:scaleX(1.0568)">ui:insert</span>
<span class="t web" style="left:62.9px;top:369px;font-size:12px;color:#000;--w:76.7;transform:scaleX(1.0796)">Page Footer</span>

<!-- sash arrows -->
<svg style="left:190px;top:432px" width="28" height="7" viewBox="0 0 28 7"><polygon points="3,5 7,0.8 11,5" fill="#5A64A0"/><polygon points="16.8,1 25.2,1 21,5.2" fill="#5A64A0"/></svg>

<!-- source editor -->
<div style="left:38px;top:439px;width:333px;height:306px;border:1px solid #CEDBF3;box-sizing:border-box;"></div>
<div id="src" style="left:39px;top:440px;width:301px;height:287px;background:#fff;"></div>
<div style="left:39px;top:440px;width:12px;height:168px;background-color:#fff;background-image:linear-gradient(45deg,#316AC5 25%,transparent 25%,transparent 75%,#316AC5 75%),linear-gradient(45deg,#316AC5 25%,transparent 25%,transparent 75%,#316AC5 75%);background-size:2px 2px;background-position:0 0,1px 1px;border-bottom:1px solid #316AC5;box-sizing:border-box;"></div>
<div style="left:39px;top:608px;width:12px;height:120px;background:#ECE9D8"></div>
<div style="left:68px;top:440px;width:1px;height:288px;background:#ECE9D8"></div>
<svg style="left:58px;top:627px" width="11" height="11" viewBox="0 0 11 11"><circle cx="5.5" cy="5.5" r="4.3" fill="#F2F5FA" stroke="#B4BFD4" stroke-width="1"/><path d="M3 5.5h5" stroke="#7A8AAE" stroke-width="1"/></svg>
<div id="code" class="mono" style="left:69px;top:439px;width:271px;height:288px;overflow:hidden;">
<span style="left:0;top:1.2px;line-height:20.48px;transform:scaleY(0.83);transform-origin:0 0">                  <span class="at" style="position:static">font-size</span>: <span class="vl" style="position:static">12px</span>;
            }
            <span class="tg" style="position:static">h1</span> {
                  <span class="at" style="position:static">font-family</span>: <span class="vl" style="position:static">Verdana, Arial, sans-serif</span>;
                  <span class="at" style="position:static">font-size</span>: <span class="vl" style="position:static">16px</span>;
            }
            <span class="tg" style="position:static">p</span> {
                <span class="at" style="position:static">background-color</span>: <span class="vl" style="position:static">#c0c0c0</span>;
            }
        <span class="tg" style="position:static">&lt;/style&gt;</span>
    <span class="tg" style="position:static">&lt;/head&gt;</span>
    <span class="tg" style="position:static">&lt;body&gt;</span>
        <span class="tg" style="position:static">&lt;h1&gt;&lt;ui:insert</span> <span class="at" style="position:static">name</span>=<span class="vl" style="position:static;font-style:italic">"pageHeader"</span><span class="tg" style="position:static">&gt;</span>Page Header<span class="tg" style="position:static">&lt;/ui:insert&gt;&lt;/h1&gt;</span>
        <span class="tg" style="position:static">&lt;p&gt;&lt;ui:insert</span> <span class="at" style="position:static">name</span>=<span class="vl" style="position:static;font-style:italic">"body"</span><span class="tg" style="position:static">&gt;</span>Page Body<span class="tg" style="position:static">&lt;/ui:insert&gt;&lt;/p&gt;</span>
        <span class="tg" style="position:static">&lt;ui:insert</span> <span class="at" style="position:static">name</span>=<span class="vl" style="position:static;font-style:italic">"pageFooter"</span><span class="tg" style="position:static">&gt;</span>Page Footer<span class="tg" style="position:static">&lt;/ui:insert&gt;</span>
    <span class="tg" style="position:static">&lt;/body&gt;</span>
<span class="tg" style="position:static">&lt;/html&gt;</span></span>
</div>
<!-- v scrollbar -->
<div class="vtrack" style="left:340px;top:440px;width:17px;height:287px;"></div>
<!-- h scrollbar -->
<div class="htrack" style="left:69px;top:727px;width:271px;height:17px;"></div>
<div style="left:38px;top:727px;width:31px;height:17px;background:#ECE9D8"></div>
<div style="left:340px;top:727px;width:17px;height:17px;background:#ECE9D8"></div>
<!-- bottom tabs left -->
<div style="left:36px;top:745px;width:337px;height:1px;background:#B4B0A0"></div>
<svg style="left:37px;top:745px" width="42" height="19" viewBox="0 0 42 19"><path d="M1 0 L1 16 Q1 17.5 2.5 17.5 L37 17.5 Q38.5 17.5 39 16 L40.5 0 Z" fill="#fff"/><path d="M1.5 1 L1.5 16 Q1.5 17.5 3 17.5 L37 17.5 Q38.5 17.5 39 16 L40 1" fill="none" stroke="#ACA899" stroke-width="1"/></svg>
<span class="t" style="left:41.5px;top:748.6px;font-size:11px;--w:31.7;transform:scaleX(0.9255)">Design</span>
<span class="t" style="left:81.6px;top:748.6px;font-size:11px;--w:37.7;transform:scaleX(0.9636)">Preview</span>
<div style="left:123px;top:745px;width:1px;height:17px;background:#ACA899"></div>

<!-- RIGHT PANE -->
<div id="rp" style="left:377px;top:101px;width:338px;height:665px;box-sizing:border-box;border:1px solid #ACA899;background:linear-gradient(to bottom,#BCD0F8 0,#A4BEF2 12px,#98B4EC 23px,#9ABDFA 24px);border-radius:9px 9px 0 0;overflow:hidden">
  <svg style="left:-1px;top:-1px" width="338" height="25" viewBox="0 0 338 25">
    <path d="M121 0 C131 1 135 8 141 15 C146 20 150 22.5 158 22.5 L338 22.5 L338 9 Q338 0 329 0 Z" fill="#ECE9D8"/>
    <path d="M121 0.5 C131 1 135 8 141 15 C146 20 150 22.5 158 22.5 L338 22.5" fill="none" stroke="#B4B09C" stroke-width="1"/>
    <path d="M121 0.5 L329 0.5 Q337.5 0.5 337.5 9 L337.5 22" fill="none" stroke="#ACA899" stroke-width="1"/>
  </svg>
</div>
<svg style="left:382px;top:105px" width="15" height="15" viewBox="0 0 15 15"><circle cx="7.3" cy="7.3" r="6.7" fill="url(#gfa)" stroke="#7CC0F8" stroke-width="0.8"/><path d="M5.3 3.8h4.6v1.7h-2.8v1.4h2.4v1.6h-2.4v2.8h-1.800z" fill="#fff"/></svg>
<span class="t" style="left:400.5px;top:107px;font-size:11px;--w:80;transform:scaleX(0.9911)">inputname.xhtml</span>
<svg style="left:488.5px;top:107px" width="12" height="12" viewBox="0 0 12 12"><path d="M1 2.2 L2.2 1 L3.5 1 L5.5 3.2 L7.5 1 L8.8 1 L10 2.2 L10 3.3 L7.8 5.5 L10 7.7 L10 8.8 L8.8 10 L7.5 10 L5.5 7.8 L3.5 10 L2.2 10 L1 8.8 L1 7.7 L3.2 5.5 L1 3.3 Z" fill="#fff" stroke="#6C6C6C" stroke-width="0.9"/></svg>
<!-- content -->
<div style="left:380px;top:126px;width:315px;height:619px;background:#808080"></div>
<div style="left:380px;top:137px;width:315px;height:18px;background:#000"></div>
<span class="t web" id="fha" style="left:380px;top:138.5px;font-size:17px;color:#fff;--w:220;transform:scaleX(1.0090)">Facelets Hello Application</span>
<div style="left:380px;top:167px;width:315px;height:72px;background:#C0C0C0"></div>
<span class="t web" style="left:380px;top:169.5px;font-size:12px;font-weight:bold;color:#FF0000;--w:94.5;transform:scaleX(0.9685)">Error Message</span>
<span class="t web" style="left:380px;top:187px;font-size:12px;--w:71.7;transform:scaleX(1.0408)">Your Name:</span>
<div style="left:461px;top:181px;width:146px;height:22px;background:#EBE9E4;border:1px solid #7F9DB9;box-sizing:border-box;"></div>
<span class="t" style="left:463.3px;top:186px;font-size:13.3px;--w:95.7;transform:scaleX(1.0193)">#{person.name}</span>
<div style="left:381px;top:205px;width:79px;height:19px;border:1px solid #003C74;border-radius:3px;box-sizing:border-box;background:linear-gradient(to bottom,#fff 0,#F4F3EE 60%,#DCD8CB 100%);"></div>
<span class="t" style="left:391.7px;top:208px;font-size:13.3px;--w:57.3;transform:scaleX(1.0066)">Say Hello</span>
<!-- right vscroll -->
<div class="vtrack" style="left:695px;top:126px;width:17px;height:619px;"></div>
<!-- bottom tabs right -->
<div style="left:380px;top:745px;width:332px;height:18px;background:#ECE9D8"></div>
<svg style="left:419px;top:745px" width="48" height="19" viewBox="0 0 48 19"><path d="M1 0 L2 16 Q2.5 17.5 4 17.5 L43 17.5 Q44.5 17.5 45 16 L46.5 0 Z" fill="#fff"/><path d="M1.5 0 L2.5 16 Q3 17.5 4.5 17.5 L43 17.5 Q44.5 17.5 45 16 L46 0" fill="none" stroke="#ACA899" stroke-width="1"/></svg>
<span class="t" style="left:384px;top:748.6px;font-size:11px;--w:31.5;transform:scaleX(0.9197)">Design</span>
<span class="t" style="left:423.7px;top:748.6px;font-size:11px;--w:37.5;transform:scaleX(0.9585)">Preview</span>
<!-- min/max -->
<svg style="left:679px;top:104px" width="32" height="14" viewBox="0 0 32 14">
  <rect x="1.5" y="1.5" width="9" height="2.5" fill="#fff" stroke="#8A8472" stroke-width="1"/>
  <rect x="19.5" y="1.5" width="9" height="9" fill="#fff" stroke="#8A8472" stroke-width="1"/>
  <path d="M19.5 3h9" stroke="#8A8472" stroke-width="1.2"/>
</svg>

<!-- scrollbar widgets -->
<div class="sbb" style="left:696px;top:126.5px;height:14.5px"><svg style="left:-1px;top:-1px" width="15" height="15" viewBox="0 0 14 14"><path d="M3.5 8.5 L7 5 L10.5 8.5" fill="none" stroke="#4D6185" stroke-width="2"/></svg></div>
<div class="sbt sbtv" style="left:696px;top:143px;width:15px;height:574px"><svg width="8" height="8" viewBox="0 0 8 8" style="left:50%;top:50%;margin:-3px 0 0 -4px"><path d="M0 0.5h6M0 2.5h6M0 4.5h6M0 6.5h6" stroke="#F4F8FF"/><path d="M1 1.5h6M1 3.5h6M1 5.5h6M1 7.5h6" stroke="#8CB0F8"/></svg></div>
<div class="sbb" style="left:696px;top:729px"><svg style="left:-1px;top:-1px" width="15" height="15" viewBox="0 0 14 14"><path d="M3.5 5 L7 8.5 L10.5 5" fill="none" stroke="#4D6185" stroke-width="2"/></svg></div>
<div class="sbb" style="left:341px;top:441px"><svg style="left:-1px;top:-1px" width="15" height="15" viewBox="0 0 14 14"><path d="M3.5 8.5 L7 5 L10.5 8.5" fill="none" stroke="#4D6185" stroke-width="2"/></svg></div>
<div class="sbt sbtv" style="left:341px;top:563px;width:15px;height:146px"><svg width="8" height="8" viewBox="0 0 8 8" style="left:50%;top:50%;margin:-3px 0 0 -4px"><path d="M0 0.5h6M0 2.5h6M0 4.5h6M0 6.5h6" stroke="#F4F8FF"/><path d="M1 1.5h6M1 3.5h6M1 5.5h6M1 7.5h6" stroke="#8CB0F8"/></svg></div>
<div class="sbb" style="left:341px;top:711px"><svg style="left:-1px;top:-1px" width="15" height="15" viewBox="0 0 14 14"><path d="M3.5 5 L7 8.5 L10.5 5" fill="none" stroke="#4D6185" stroke-width="2"/></svg></div>
<div class="sbb" style="left:69px;top:728px"><svg style="left:-1px;top:-1px" width="15" height="15" viewBox="0 0 14 14"><path d="M8.5 3 L5 6.5 L8.5 10" fill="none" stroke="#4D6185" stroke-width="2"/></svg></div>
<div class="sbt sbth" style="left:86px;top:728px;width:66px;height:15px"><svg width="7" height="8" viewBox="0 0 7 8" style="left:50%;top:50%;margin:-4px 0 0 -4px"><path d="M0.5 0v7M2.5 0v7M4.5 0v7M6.5 0v7" stroke="#EEF4FE"/><path d="M1.5 1v7M3.5 1v7M5.5 1v7" stroke="#8CB0F8"/></svg></div>
<div class="sbb" style="left:324px;top:728px;margin-left:-0.5px"><svg style="left:-1px;top:-1px" width="15" height="15" viewBox="0 0 14 14"><path d="M5 3 L8.5 6.5 L5 10" fill="none" stroke="#4D6185" stroke-width="2"/></svg></div>
<!-- STATUS BAR -->
<div style="left:142px;top:768px;width:1px;height:23px;background:#ACA899"></div>
<div style="left:143px;top:768px;width:1px;height:23px;background:#fff"></div>
<span class="t" style="left:115.9px;top:774px;font-size:11px;--w:22.9;transform:scaleX(0.9604)">html/</span>
<div style="left:460px;top:769px;width:159px;height:25px;border:1px solid #fff;border-radius:6px;box-sizing:border-box;box-shadow:1px 1px 0 #C9C5B2;"></div>
<div style="left:624px;top:769px;width:90px;height:25px;border:1px solid #fff;border-radius:6px;box-sizing:border-box;box-shadow:1px 1px 0 #C9C5B2;"></div>
<!-- MISC START -->
<svg style="left:12.5px;top:106.5px" width="16" height="3" viewBox="0 0 16 3"><path d="M1 1h2v2h-2zM5 1h2v2h-2zM9 1h2v2h-2zM13 1h2v2h-2z" fill="#fff"/><path d="M0 0h2v2h-2zM4 0h2v2h-2zM8 0h2v2h-2zM12 0h2v2h-2z" fill="#B0AC9C"/></svg>
<svg style="left:15px;top:121px" width="9" height="8" viewBox="0 0 9 8"><rect x="2.5" y="0.5" width="6" height="4" fill="#fff" stroke="#5A5048"/><path d="M2.5 1.5h6" stroke="#5A5048"/><rect x="0.5" y="3.5" width="6" height="4" fill="#fff" stroke="#5A5048"/><path d="M0.5 4.5h6" stroke="#5A5048"/></svg>
<svg style="left:14.5px;top:139.5px;overflow:visible" width="10" height="14" viewBox="0 0 10 14"><path d="M1 0v13M1 3.5h3M1 10h3" stroke="#5A6A9A" stroke-width="1.2" fill="none"/><rect x="4" y="1" width="5.5" height="5" fill="#E88A28" stroke="#B85A10" stroke-width="0.8"/><path d="M6.75 1.5v4M4.5 3.5h4.5" stroke="#FFE8C0" stroke-width="0.8"/><rect x="4" y="7.5" width="5.5" height="5" fill="#E88A28" stroke="#B85A10" stroke-width="0.8"/><path d="M6.75 8v4M4.5 10h4.5" stroke="#FFE8C0" stroke-width="0.8"/></svg>
<svg style="left:13.5px;top:160.5px;overflow:visible" width="11" height="17" viewBox="0 0 11 17"><path d="M2.5 4v11.5M2.5 8h4M2.5 14h4" stroke="#5A6A9A" stroke-width="1.2" fill="none"/><circle cx="2.7" cy="2.7" r="2.5" fill="#3AA858" stroke="#1A7A38" stroke-width="0.7"/><circle cx="8" cy="8" r="2.5" fill="#3AA858" stroke="#1A7A38" stroke-width="0.7"/><circle cx="8" cy="14" r="2.5" fill="#3AA858" stroke="#1A7A38" stroke-width="0.7"/></svg>
<svg style="left:723.5px;top:106.5px" width="16" height="3" viewBox="0 0 16 3"><path d="M1 1h2v2h-2zM5 1h2v2h-2zM9 1h2v2h-2zM13 1h2v2h-2z" fill="#fff"/><path d="M0 0h2v2h-2zM4 0h2v2h-2zM8 0h2v2h-2zM12 0h2v2h-2z" fill="#B0AC9C"/></svg>
<svg style="left:725.5px;top:121px" width="9" height="8" viewBox="0 0 9 8"><rect x="2.5" y="0.5" width="6" height="4" fill="#fff" stroke="#5A5048"/><path d="M2.5 1.5h6" stroke="#5A5048"/><rect x="0.5" y="3.5" width="6" height="4" fill="#fff" stroke="#5A5048"/><path d="M0.5 4.5h6" stroke="#5A5048"/></svg>
<svg style="left:723.5px;top:139px;overflow:visible" width="14" height="15" viewBox="0 0 14 15"><rect x="0.7" y="0.7" width="5" height="5" fill="#C8E0F8" stroke="#1A68B8" stroke-width="1.2"/><rect x="0.7" y="9" width="5" height="5" fill="#C8E0F8" stroke="#1A68B8" stroke-width="1.2"/><path d="M7.5 3h6M7.5 11.5h6M11 7.3h2.5" stroke="#1A68B8" stroke-width="1.2"/><rect x="8" y="6" width="2.5" height="2.5" fill="#fff" stroke="#1A68B8" stroke-width="0.9"/></svg>
<svg style="left:723.5px;top:176.5px" width="16" height="3" viewBox="0 0 16 3"><path d="M1 1h2v2h-2zM5 1h2v2h-2zM9 1h2v2h-2zM13 1h2v2h-2z" fill="#fff"/><path d="M0 0h2v2h-2zM4 0h2v2h-2zM8 0h2v2h-2zM12 0h2v2h-2z" fill="#B0AC9C"/></svg>
<svg style="left:725.5px;top:191px" width="9" height="8" viewBox="0 0 9 8"><rect x="2.5" y="0.5" width="6" height="4" fill="#fff" stroke="#5A5048"/><path d="M2.5 1.5h6" stroke="#5A5048"/><rect x="0.5" y="3.5" width="6" height="4" fill="#fff" stroke="#5A5048"/><path d="M0.5 4.5h6" stroke="#5A5048"/></svg>
<svg style="left:724px;top:210.5px;overflow:visible" width="14" height="12" viewBox="0 0 14 12"><rect x="0.5" y="0.5" width="12.5" height="11" fill="#fff" stroke="#4A5A9A"/><rect x="1" y="1" width="11.5" height="2.5" fill="#6A80C8"/><path d="M1 5.5h12M1 7.5h12M1 9.5h12M4.5 3.5v8" stroke="#8090C0" stroke-width="0.8"/></svg>
<svg style="left:57px;top:170px;overflow:visible" width="14" height="14" viewBox="0 0 14 14"><defs><radialGradient id="gball" cx="0.4" cy="0.350" r="0.7"><stop offset="0" stop-color="#FFF0D8"/><stop offset="0.6" stop-color="#E0A878"/><stop offset="1" stop-color="#B06830"/></radialGradient></defs><circle cx="6.5" cy="6.5" r="5.5" fill="url(#gball)" stroke="#8A4A20" stroke-width="0.8"/><path d="M6.5 0v13M0 6.5h13" stroke="#6A2A10" stroke-width="1"/></svg>
<svg style="left:138px;top:169px;overflow:visible" width="16" height="16" viewBox="0 0 16 16"><rect x="0.5" y="0.5" width="14.5" height="15" fill="#FFF4F0" stroke="#F0D8D0" stroke-width="0.8"/><circle cx="7.7" cy="5" r="2.8" fill="#D86840"/><path d="M3 14.5 Q3 8.5 7.7 8.5 Q12.4 8.5 12.4 14.5Z" fill="#D05830"/></svg>
<svg style="left:39.5px;top:772px" width="3" height="16" viewBox="0 0 3 16"><path d="M1 1h2v2h-2zM1 5h2v2h-2zM1 9h2v2h-2zM1 13h2v2h-2z" fill="#fff"/><path d="M0 0h2v2h-2zM0 4h2v2h-2zM0 8h2v2h-2zM0 12h2v2h-2z" fill="#B2AE9C"/></svg>
<svg style="left:200px;top:772px" width="3" height="16" viewBox="0 0 3 16"><path d="M1 1h2v2h-2zM1 5h2v2h-2zM1 9h2v2h-2zM1 13h2v2h-2z" fill="#fff"/><path d="M0 0h2v2h-2zM0 4h2v2h-2zM0 8h2v2h-2zM0 12h2v2h-2z" fill="#B2AE9C"/></svg>
<svg style="left:55px;top:772.5px;overflow:visible" width="15" height="14" viewBox="0 0 15 14"><rect x="0.5" y="1.5" width="5" height="11.5" fill="#fff" stroke="#4A68B0"/><rect x="1" y="2" width="4" height="2.5" fill="#5A80D0"/><g transform="translate(7.5,-0.5)"><path d="M3.5 0 L4.6 2.4 L7 3.5 L4.6 4.6 L3.5 7 L2.4 4.6 L0 3.5 L2.4 2.4 Z" fill="#FFF8C8" stroke="#C8961E" stroke-width="1"/></g></svg>
<svg style="left:465.5px;top:774px" width="3" height="16" viewBox="0 0 3 16"><path d="M1 1h2v2h-2zM1 5h2v2h-2zM1 9h2v2h-2zM1 13h2v2h-2z" fill="#fff"/><path d="M0 0h2v2h-2zM0 4h2v2h-2zM0 8h2v2h-2zM0 12h2v2h-2z" fill="#B2AE9C"/></svg>
<svg style="left:479.5px;top:777.5px" width="9" height="8" viewBox="0 0 9 8"><rect x="2.5" y="0.5" width="6" height="4" fill="#fff" stroke="#5A5048"/><path d="M2.5 1.5h6" stroke="#5A5048"/><rect x="0.5" y="3.5" width="6" height="4" fill="#fff" stroke="#5A5048"/><path d="M0.5 4.5h6" stroke="#5A5048"/></svg>
<svg style="left:500px;top:773px;overflow:visible" width="15" height="15" viewBox="0 0 15 15"><path d="M0.5 0.5h10.5 Q13 3 11.5 7 Q13 11 11.5 14.5h-11z" fill="#FFF8F0" stroke="#6A7AB0" stroke-width="0.9"/><circle cx="5" cy="4.5" r="2.6" fill="#E03030"/><path d="M2 13l3-5 3 5z" fill="#F0A020" stroke="#C07010" stroke-width="0.6"/><path d="M0.5 7.5h11" stroke="#8A9AC8" stroke-width="0.7"/></svg>
<svg style="left:523px;top:773px;overflow:visible" width="15" height="15" viewBox="0 0 15 15"><rect x="3.5" y="2.5" width="10.5" height="12" fill="#F0C890" stroke="#B08040"/><rect x="5" y="4.5" width="7.5" height="9" fill="#fff"/><rect x="6.5" y="0.5" width="4.5" height="3" fill="#A0A0A8" stroke="#707078" stroke-width="0.7"/><path d="M8 7h4M8 9.5h4M8 12h4" stroke="#8090B0" stroke-width="0.9"/><path d="M0.5 8.5l3 3.5 5-7" fill="none" stroke="#1A58C8" stroke-width="1.8"/></svg>
<svg style="left:546px;top:773px;overflow:visible" width="15" height="15" viewBox="0 0 15 15"><rect x="0.5" y="0.5" width="14" height="14" fill="#F8F0D8" stroke="#A89868"/><circle cx="7.5" cy="7.5" r="5.5" fill="url(#gglobe)" stroke="#1A58B0" stroke-width="0.7"/><path d="M5 4.5 Q7.5 3 9.5 5 Q9 8 7.5 10 Q5.5 7 5 4.5Z" fill="#D8F0C8"/><path d="M7.5 4v5" stroke="#3A9A38" stroke-width="0.8"/></svg>
<svg style="left:570px;top:774.5px;overflow:visible" width="14" height="13" viewBox="0 0 14 13"><rect x="0.5" y="0.5" width="13" height="9" rx="1" fill="#2A68D0" stroke="#1A3A90"/><rect x="2" y="2" width="10" height="6" fill="#5A98F0"/><path d="M3.5 4h6M3.5 6h4" stroke="#fff" stroke-width="0.9"/><path d="M6 10h2v1.5h3v1h-8v-1h3z" fill="#1A3A90"/></svg>
<svg style="left:593px;top:774px;overflow:visible" width="14" height="14" viewBox="0 0 14 14"><path d="M2.5 0v13M7 0v13M11.5 0v13" stroke="#3A5A2A" stroke-width="1"/><rect x="0.5" y="6.5" width="4" height="3" rx="1" fill="#E8C020" stroke="#907010" stroke-width="0.6"/><rect x="5" y="2.5" width="4" height="3" rx="1" fill="#E8A020" stroke="#905010" stroke-width="0.6"/><rect x="9.5" y="7.5" width="4" height="3" rx="1" fill="#58A8E8" stroke="#2060A0" stroke-width="0.6"/></svg>
<svg style="left:630px;top:774px" width="3" height="16" viewBox="0 0 3 16"><path d="M1 1h2v2h-2zM1 5h2v2h-2zM1 9h2v2h-2zM1 13h2v2h-2z" fill="#fff"/><path d="M0 0h2v2h-2zM0 4h2v2h-2zM0 8h2v2h-2zM0 12h2v2h-2z" fill="#B2AE9C"/></svg>
<svg style="left:643.5px;top:777.5px" width="9" height="8" viewBox="0 0 9 8"><rect x="2.5" y="0.5" width="6" height="4" fill="#fff" stroke="#5A5048"/><path d="M2.5 1.5h6" stroke="#5A5048"/><rect x="0.5" y="3.5" width="6" height="4" fill="#fff" stroke="#5A5048"/><path d="M0.5 4.5h6" stroke="#5A5048"/></svg>
<svg style="left:664px;top:774px;overflow:visible" width="15" height="11" viewBox="0 0 15 11"><defs><radialGradient id="geye" cx="0.5" cy="0.5" r="0.7"><stop offset="0" stop-color="#7A80D0"/><stop offset="1" stop-color="#2A2A78"/></radialGradient></defs><rect x="0" y="0" width="14.5" height="11" fill="url(#geye)"/><path d="M2 6 Q7 1.5 12.5 5.5 Q7 9.5 2 6Z" fill="#9AA0E0"/><circle cx="7.3" cy="5.6" r="2" fill="#1A1A50"/><path d="M1.5 3.5 Q7 0 13 3" stroke="#1A1A58" fill="none" stroke-width="0.9"/></svg>
<svg style="left:688px;top:774px;overflow:visible" width="14" height="14" viewBox="0 0 14 14"><rect x="0.5" y="0.5" width="10" height="9" fill="#FFFBE8" stroke="#B0A070"/><path d="M2 2l5 5M2 2h3.5M2 2v3.5" stroke="#101040" stroke-width="1.4" fill="none"/><rect x="3.5" y="6.5" width="9.5" height="6.5" fill="#fff" stroke="#2A68C0"/><path d="M5 8.5h6" stroke="#E03030" stroke-width="1"/><path d="M5 11h6" stroke="#30A040" stroke-width="1"/><path d="M4 8.5h1M4 11h1" stroke="#404040"/></svg>
<!-- MISC END -->
</div>
</body>
</html>
